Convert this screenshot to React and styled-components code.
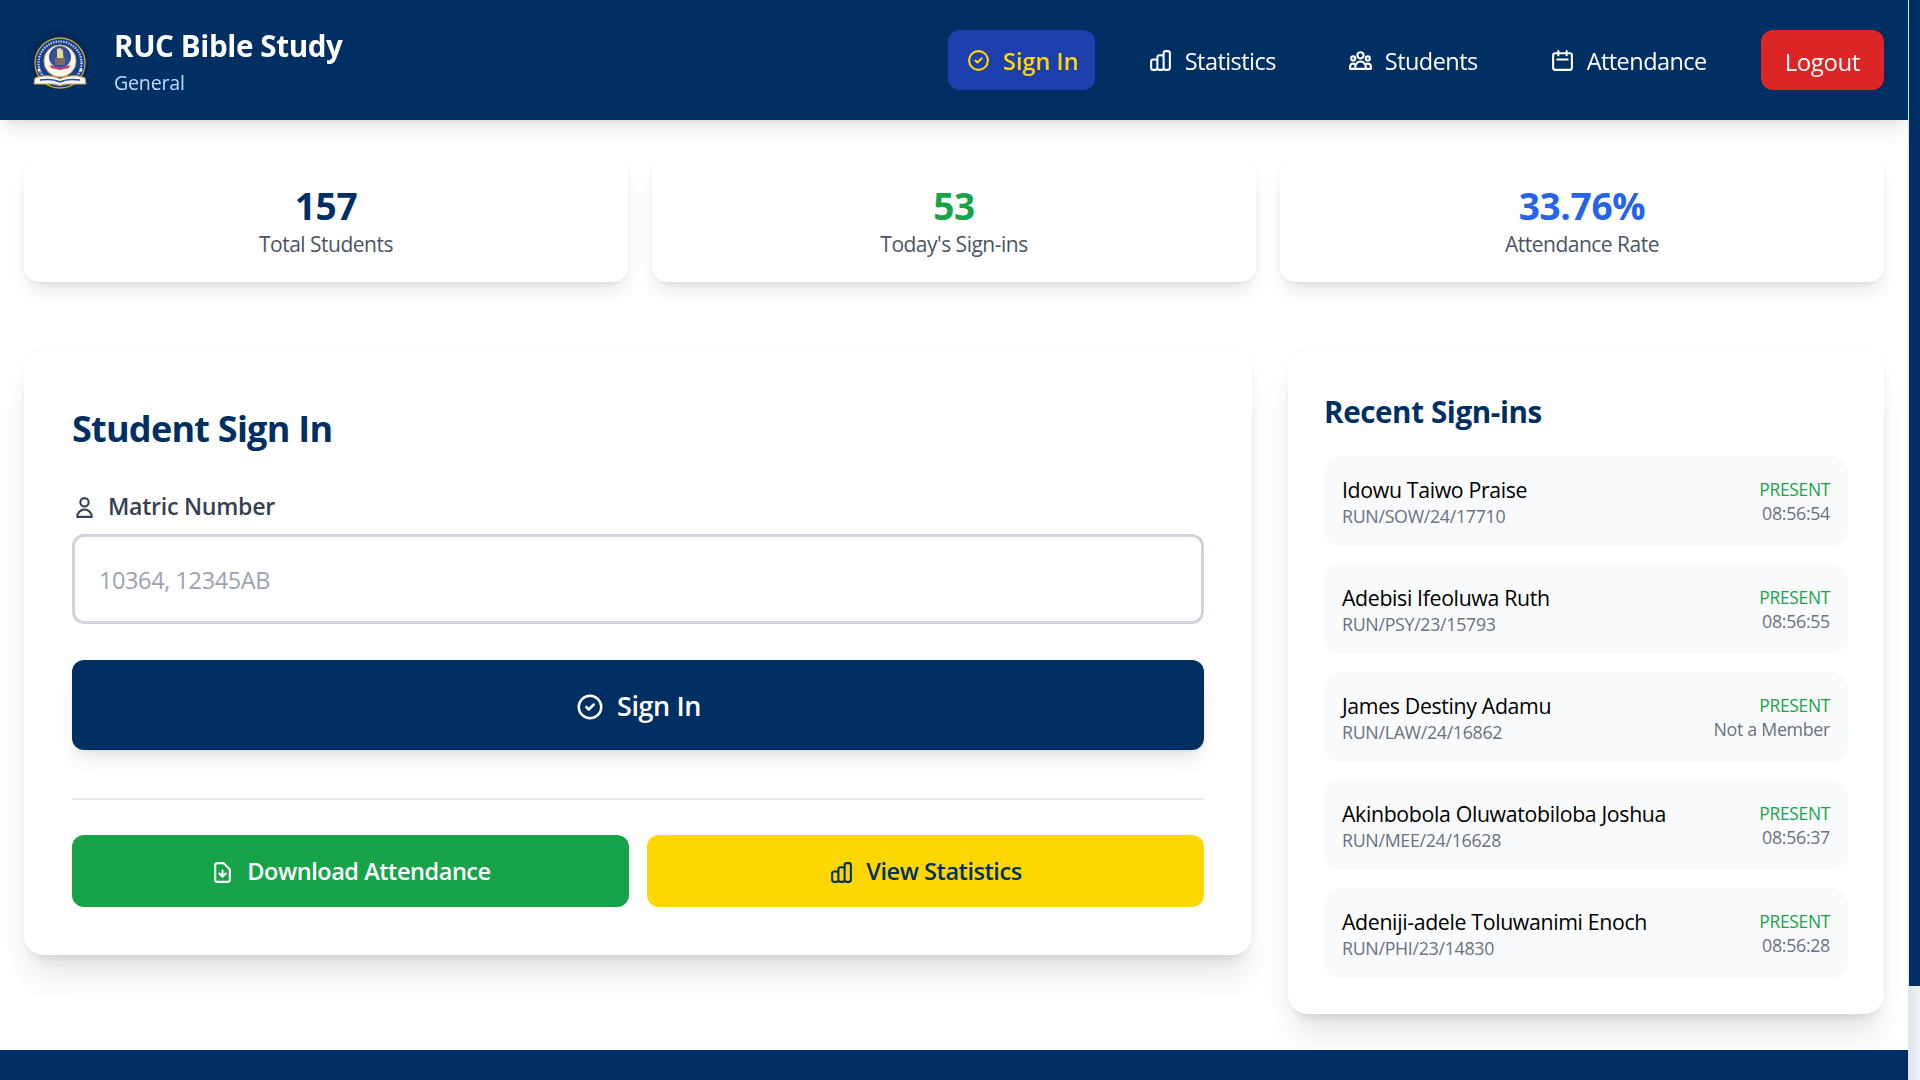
import React from "react";
import styled, { createGlobalStyle } from "styled-components";

const navy = "#002f63";

const Global = createGlobalStyle`
  html::-webkit-scrollbar { display: none; }
  body { margin: 0; background: #fff; font-family: "Open Sans", "Noto Sans", sans-serif; color: #111; }
  #root { padding-right: 12px; }
  * { box-sizing: border-box; }
`;

const ScrollRail = styled.div`
  position: fixed; top: 0; right: 0; bottom: 0; width: 12px; padding-left: 1px;
  background: linear-gradient(90deg, #dfe4ee, #eef1f6);
`;
const ScrollThumb = styled.div`height: 986px; background: ${navy};`;

const Header = styled.header`
  position: relative; height: 120px; background: ${navy}; display: flex; align-items: center; justify-content: space-between;
  padding: 0 24px 0 29px; box-shadow: 0 12px 19px -4px rgba(0,0,0,.1), 0 5px 7px -5px rgba(0,0,0,.1);
`;
const Brand = styled.div`display: flex; align-items: center; gap: 25px;`;
const BrandText = styled.div`display: flex; flex-direction: column; margin-top: 4px;`;
const Title = styled.h1`margin: 0; font-size: 29.6px; line-height: 40px; font-weight: 700; color: #fff; letter-spacing: -.4px;`;
const Subtitle = styled.div`margin-top: 2px; font-size: 19.6px; line-height: 30px; color: #bfdbfe; letter-spacing: -.2px;`;
const Nav = styled.nav`display: flex; align-items: center; gap: 36px;`;
const NavItem = styled.a`
  display: flex; align-items: center; gap: 12px; height: 60px; padding: 2px ${p => p.$active ? "16px" : "18px"} 0 18px; border-radius: 12px;
  margin-right: ${p => p.$active ? "-1px" : 0};
  font-size: 23.5px; letter-spacing: ${p => p.$active ? "0" : "-.55px"}; color: ${p => p.$active ? "#ffd700" : "#fff"};
  font-weight: ${p => p.$active ? 600 : 400};
  background: ${p => p.$active ? "#1e40af" : "transparent"};
  svg { width: 25px; height: 25px; flex: none; margin-top: -2px; }
`;
const Logout = styled.a`
  display: flex; align-items: center; height: 60px; padding: 2px 24px 0; border-radius: 12px;
  background: #dc2626; color: #fff; font-size: 24px; letter-spacing: -.4px;
`;

const Stats = styled.section`display: grid; grid-template-columns: repeat(3, 1fr); gap: 24px; padding: 37px 24px 0;`;
const StatCard = styled.div`
  height: 125px; background: #fff; border-radius: 15px; box-shadow: 0 12px 19px -4px rgba(0,0,0,.1), 0 5px 7px -5px rgba(0,0,0,.1), 0 0 5px rgba(0,0,0,.025);
  display: flex; flex-direction: column; align-items: center; padding-top: 25px;
`;
const StatValue = styled.div`font-size: 37px; line-height: 48px; font-weight: 700; color: ${p => p.$color}; letter-spacing: -.3px;`;
const StatLabel = styled.div`margin-top: -1px; font-size: 21px; line-height: 30px; color: #4b5563; letter-spacing: -.5px;`;

const Main = styled.main`display: grid; grid-template-columns: 1228fr 596fr; gap: 36px; align-items: start; padding: 68px 24px 36px;`;
const Card = styled.div`
  background: #fff; border-radius: 20px; padding: ${p => p.$pad};
  box-shadow: 0 25px 31px -6px rgba(0,0,0,.1), 0 10px 12px -7px rgba(0,0,0,.1), 0 0 12px rgba(0,0,0,.025);
`;
const CardTitle = styled.h2`margin: 0; font-size: 36px; line-height: 61px; font-weight: 700; color: ${navy}; letter-spacing: -.75px;`;
const Label = styled.label`
  display: flex; align-items: center; gap: 11px; margin-top: 29px; font-size: 23.2px; line-height: 36px; font-weight: 600; color: #374151; letter-spacing: -.3px;
  svg { width: 25px; height: 25px; flex: none; margin-top: 3px; }
`;
const Input = styled.input`
  display: block; width: 100%; height: 90px; margin-top: 10px; padding: 1px 24px 0; border: 3px solid #d1d5db; border-radius: 12px;
  font: 400 23.5px "Open Sans", sans-serif; letter-spacing: -.4px; outline: none; background: #fff;
  &::placeholder { color: #9ca3af; opacity: 1; }
`;
const SubmitButton = styled.button`
  display: flex; width: 100%; height: 90px; margin-top: 36px; align-items: center; justify-content: center; gap: 12px;
  background: ${navy}; border: 0; border-radius: 12px; color: #fff; font: 600 27px "Open Sans", sans-serif; letter-spacing: -.4px;
  box-shadow: 0 12px 19px -4px rgba(0,0,0,.1), 0 5px 7px -5px rgba(0,0,0,.1);
  svg { width: 30px; height: 30px; margin-top: 3px; }
`;
const Divider = styled.hr`margin: 48px 0 35px; border: 0; border-top: 2px solid #e5e7eb;`;
const Actions = styled.div`display: grid; grid-template-columns: 1fr 1fr; gap: 18px;`;
const ActionButton = styled.button`
  display: flex; height: 72px; align-items: center; justify-content: center; gap: 12px; border: 0; border-radius: 12px;
  background: ${p => p.$bg}; color: ${p => p.$fg}; font: 600 23.5px "Open Sans", sans-serif; letter-spacing: -.45px;
  svg { width: 25px; height: 25px; margin-top: 3px; }
`;
const SideTitle = styled.h3`margin: 0 0 18px; font-size: 29.6px; line-height: 52px; font-weight: 700; color: ${navy}; letter-spacing: -.4px;`;
const List = styled.div`display: flex; flex-direction: column; gap: 18px;`;
const Item = styled.div`
  height: 90px; background: #f9fafb; border-radius: 15px; padding: 0 18px; display: flex; align-items: center; justify-content: space-between;
`;
const Col = styled.div`display: flex; flex-direction: column; align-items: ${p => p.$end ? "flex-end" : "flex-start"}; padding-top: ${p => p.$end ? 0 : "2px"};`;
const Name = styled.div`font-size: 21.3px; line-height: 28px; font-weight: 500; color: #000; letter-spacing: -.35px;`;
const Matric = styled.div`font-size: 17.8px; line-height: 24px; color: #6b7280; letter-spacing: -.3px;`;
const Status = styled.div`font-size: 17.4px; line-height: 24px; color: #16a34a; letter-spacing: -.3px;`;
const Footer = styled.footer`height: 133px; background: ${navy};`;

const Ic = ({ d, sw = 2 }) => (
  <svg viewBox="0 0 24 24" fill="none" stroke="currentColor" strokeWidth={sw} strokeLinecap="round" strokeLinejoin="round">
    {[].concat(d).map((x, i) => <path key={i} d={x} />)}
  </svg>
);
const check = "M9 12l2 2 4-4m6 2a9 9 0 11-18 0 9 9 0 0118 0z";
const chart = "M9 19v-6a2 2 0 00-2-2H5a2 2 0 00-2 2v6a2 2 0 002 2h2a2 2 0 002-2zm0 0V9a2 2 0 012-2h2a2 2 0 012 2v10m-6 0a2 2 0 002 2h2a2 2 0 002-2m0 0V5a2 2 0 012-2h2a2 2 0 012 2v14a2 2 0 01-2 2h-2a2 2 0 01-2-2z";
const group = "M17 20h5v-2a3 3 0 00-5.356-1.857M17 20H7m10 0v-2c0-.656-.126-1.283-.356-1.857M7 20H2v-2a3 3 0 015.356-1.857M7 20v-2c0-.656.126-1.283.356-1.857m0 0a5.002 5.002 0 019.288 0M15 7a3 3 0 11-6 0 3 3 0 016 0zm6 3a2 2 0 11-4 0 2 2 0 014 0zM7 10a2 2 0 11-4 0 2 2 0 014 0z";
const calendar = "M8 7V3m8 4V3m-9 8h10M5 21h14a2 2 0 002-2V7a2 2 0 00-2-2H5a2 2 0 00-2 2v12a2 2 0 002 2z";
const user = "M16 7a4 4 0 11-8 0 4 4 0 018 0zM12 14a7 7 0 00-7 7h14a7 7 0 00-7-7z";
const doc = "M12 10v6m0 0l-3-3m3 3l3-3m2 8H7a2 2 0 01-2-2V5a2 2 0 012-2h5.586a1 1 0 01.707.293l5.414 5.414a1 1 0 01.293.707V19a2 2 0 01-2 2z";

const LogoMark = styled.svg`width: 60px; height: 60px; flex: none; display: block;`;
const Logo = () => (
  <LogoMark viewBox="0 0 60 60">
    <circle cx="30" cy="30" r="30" fill="#002a58" />
    <circle cx="31" cy="33" r="25" fill="#173f8f" stroke="#c9a53a" strokeWidth="1.3" />
    <circle cx="31" cy="33" r="21.5" fill="none" stroke="#cfd9ec" strokeWidth="2.2" strokeDasharray="1.4 1.2" />
    <circle cx="31" cy="31" r="16" fill="#fbf8ea" stroke="#d3b350" strokeWidth="1" />
    <circle cx="31" cy="27" r="11" fill="#33509c" />
    <path d="M28 19c4-2 7 1 6 5l1 6h-7z" fill="#e8d98a" />
    <path d="M26 28h10v7H26z" fill="#7a6a6a" />
    <path d="M21 35l10 3 10-3-1 3-9 2-9-2z" fill="#c8366a" />
    <circle cx="10" cy="40" r="1.5" fill="#fff" />
    <circle cx="52" cy="40" r="1.5" fill="#fff" />
    <path d="M6 48c8-3 17-3 25 1 8-4 17-4 25-1l1 6H37l-6 1.500-6-1.500H5z" fill="#f4f6fb" stroke="#c9a53a" strokeWidth="1" />
    <path d="M11 50c7-1 14-1 20 2 6-3 13-3 20-2" fill="none" stroke="#1f4fa8" strokeWidth="1.6" />
  </LogoMark>
);

const rows = [
  ["Idowu Taiwo Praise", "RUN/SOW/24/17710", "08:56:54"],
  ["Adebisi Ifeoluwa Ruth", "RUN/PSY/23/15793", "08:56:55"],
  ["James Destiny Adamu", "RUN/LAW/24/16862", "Not a Member"],
  ["Akinbobola Oluwatobiloba Joshua", "RUN/MEE/24/16628", "08:56:37"],
  ["Adeniji-adele Toluwanimi Enoch", "RUN/PHI/23/14830", "08:56:28"],
];

export default function App() {
  return (
    <>
      <Global />
      <ScrollRail><ScrollThumb /></ScrollRail>
      <Header>
        <Brand>
          <Logo />
          <BrandText>
            <Title>RUC Bible Study</Title>
            <Subtitle>General</Subtitle>
          </BrandText>
        </Brand>
        <Nav>
          <NavItem $active><Ic d={check} />Sign In</NavItem>
          <NavItem><Ic d={chart} />Statistics</NavItem>
          <NavItem><Ic d={group} />Students</NavItem>
          <NavItem><Ic d={calendar} />Attendance</NavItem>
          <Logout>Logout</Logout>
        </Nav>
      </Header>
      <Stats>
        <StatCard><StatValue $color={navy}>157</StatValue><StatLabel>Total Students</StatLabel></StatCard>
        <StatCard><StatValue $color="#16a34a">53</StatValue><StatLabel>Today's Sign-ins</StatLabel></StatCard>
        <StatCard><StatValue $color="#2563eb">33.76%</StatValue><StatLabel>Attendance Rate</StatLabel></StatCard>
      </Stats>
      <Main>
        <Card $pad="48px">
          <CardTitle>Student Sign In</CardTitle>
          <Label><Ic d={user} />Matric Number</Label>
          <Input placeholder="10364, 12345AB" />
          <SubmitButton><Ic d={check} />Sign In</SubmitButton>
          <Divider />
          <Actions>
            <ActionButton $bg="#16a34a" $fg="#fff"><Ic d={doc} />Download Attendance</ActionButton>
            <ActionButton $bg="#ffd700" $fg={navy}><Ic d={chart} />View Statistics</ActionButton>
          </Actions>
        </Card>
        <Card $pad="36px">
          <SideTitle>Recent Sign-ins</SideTitle>
          <List>
            {rows.map(r => (
              <Item key={r[1]}>
                <Col><Name>{r[0]}</Name><Matric>{r[1]}</Matric></Col>
                <Col $end><Status>PRESENT</Status><Matric>{r[2]}</Matric></Col>
              </Item>
            ))}
          </List>
        </Card>
      </Main>
      <Footer />
    </>
  );
}
